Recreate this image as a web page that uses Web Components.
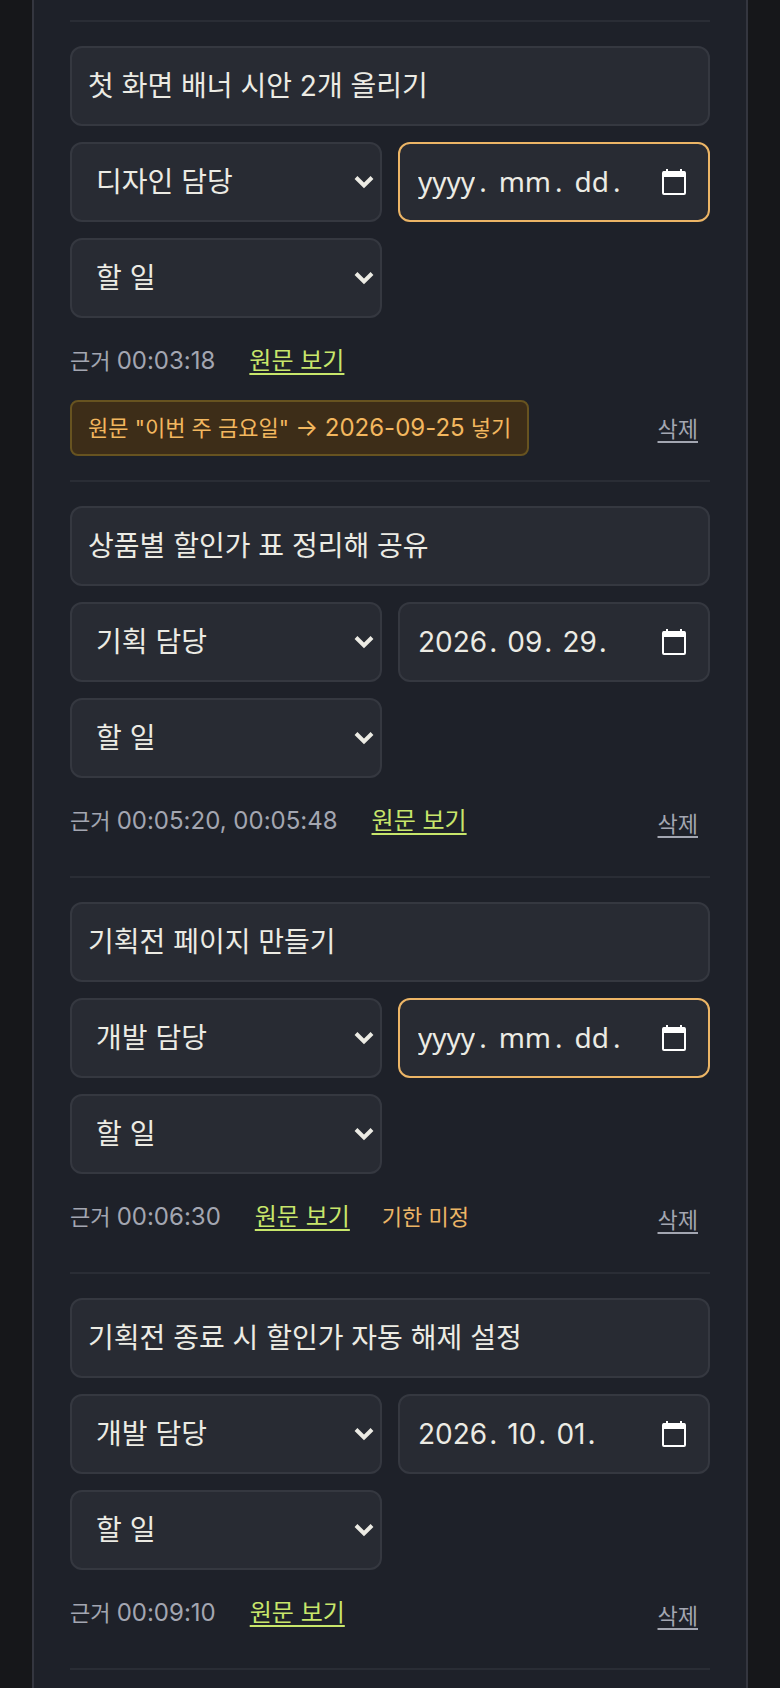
<!DOCTYPE html>
<html lang="ko">
<head>
<meta charset="utf-8">
<meta name="viewport" content="width=device-width, initial-scale=1">
<title>할 일 목록</title>
<style>
body { margin: 0; background: #16171a; color: #ecebe4; font-family: Inter, "Noto Sans CJK KR", sans-serif; }
</style>
</head>
<body>
<task-card>
  <task-item name="첫 화면 배너 시안 2개 올리기" owner="디자인 담당" evidence="00:03:18" phrase="이번 주 금요일" suggestion="2026-09-25"></task-item>
  <task-item name="상품별 할인가 표 정리해 공유" owner="기획 담당" due="2026-09-29" evidence="00:05:20, 00:05:48"></task-item>
  <task-item name="기획전 페이지 만들기" owner="개발 담당" evidence="00:06:30" note="기한 미정"></task-item>
  <task-item name="기획전 종료 시 할인가 자동 해제 설정" owner="개발 담당" due="2026-10-01" evidence="00:09:10"></task-item>
</task-card>
<script>
class TaskCard extends HTMLElement {
  constructor() {
    super();
    this.attachShadow({ mode: 'open' }).innerHTML = `
      <style>
        :host { display: block; box-sizing: border-box; min-height: 100vh; margin: 0 32px; padding: 20px 36px 0;
          background: #1e2129; border: solid #34363f; border-width: 0 2px; }
        .list { border-bottom: 2px solid #2a2d35; }
      </style>
      <div class="list" role="list"><slot></slot></div>`;
  }
}

const fieldStyle = `
  * { box-sizing: border-box; }
  :host { display: grid; min-width: 0; align-items: center; }
  .box { grid-area: 1 / 1; width: 100%; height: 80px; margin: 0; border: 2px solid #353840; border-radius: 12px;
    background: #282b33; color: inherit; font: inherit; font-size: 28px; padding: 0 16px; outline: none; }
  svg { display: block; }`;

class TextField extends HTMLElement {
  connectedCallback() {
    this.attachShadow({ mode: 'open' }).innerHTML = `
      <style>${fieldStyle}
        .box { padding-bottom: 4px; }
      </style><input class="box" type="text" aria-label="할 일 이름">`;
    this.shadowRoot.querySelector('input').value = this.getAttribute('value');
  }
}

class SelectField extends HTMLElement {
  connectedCallback() {
    this.attachShadow({ mode: 'open' }).innerHTML = `
      <style>${fieldStyle}
        select { appearance: none; }
        .box { padding: 0 48px 0 24px; }
        svg { grid-area: 1 / 1; justify-self: end; margin-right: 8px; pointer-events: none; }
      </style>
      <select class="box"><option></option></select>
      <svg width="20" height="14" viewBox="0 0 20 14" fill="none" stroke="#ecebe4" stroke-width="4" aria-hidden="true"><path d="M2 2.5l8 8 8-8"/></svg>`;
    this.shadowRoot.querySelector('select').setAttribute('aria-label', this.getAttribute('label'));
    this.shadowRoot.querySelector('option').textContent = this.getAttribute('value');
  }
}

class DateField extends HTMLElement {
  connectedCallback() {
    this.attachShadow({ mode: 'open' }).innerHTML = `
      <style>${fieldStyle}
        .box { display: flex; align-items: center; gap: 8px; }
        .part { display: flex; align-items: center; }
        input { field-sizing: content; height: 40px; margin: 0; padding: 0 2px; border: 0; background: none; color: inherit;
          font: inherit; outline: none; }
        input::placeholder { color: inherit; opacity: 1; }
        :host(:not([value])) .box { border-color: #ecb566; font-family: "Noto Sans", sans-serif; gap: 10px; padding-bottom: 2px; }
        :host(:not([value])) input { padding-right: 4px; }
        button { grid-area: 1 / 1; justify-self: end; margin-right: 24px; padding: 0; border: 0; background: none; }
      </style>
      <div class="box" role="group" aria-label="기한">
        <span class="part"><input type="text" placeholder="yyyy" aria-label="연도">.</span>
        <span class="part"><input type="text" placeholder="mm" aria-label="월">.</span>
        <span class="part"><input type="text" placeholder="dd" aria-label="일">.</span>
      </div>
      <button type="button" aria-label="달력 열기"><svg width="24" height="26" viewBox="0 0 24 26" fill="none"><rect x="1" y="3" width="22" height="22" rx="1" stroke="#fff" stroke-width="2"/><path d="M1 2.5h22v5.5H1zM4 0h2v3H4zM18 0h2v3h-2z" fill="#fff"/></svg></button>`;
    const parts = (this.getAttribute('value') || '').split('-');
    this.shadowRoot.querySelectorAll('input').forEach((input, i) => { input.value = parts[i] || ''; });
  }
}

class TaskItem extends HTMLElement {
  connectedCallback() {
    const a = n => (this.getAttribute(n) || '').replace(/&/g, '&amp;').replace(/"/g, '&quot;');
    this.setAttribute('role', 'listitem');
    this.attachShadow({ mode: 'open' }).innerHTML = `
      <style>
        * { box-sizing: border-box; }
        :host { display: block; padding: 24px 0; border-top: 2px solid #2a2d35; }
        .fields { display: grid; grid-template-columns: 1fr 1fr; gap: 16px; }
        .wide { grid-column: 1 / -1; }
        .meta { display: flex; flex-wrap: wrap; align-items: center; gap: 8px 32px; margin-top: 16px; font-size: 22px; }
        .evidence, .note, a { height: 58px; line-height: 54px; }
        .evidence { color: #a3a6b1; padding-right: 2px; }
        .number { font-size: 24px; }
        a { color: #c8e66b; font-size: 24px; text-underline-offset: 4px; text-decoration-thickness: 2px; }
        .note { color: #ecb566; }
        button { height: 56px; font: inherit; margin: 0; }
        .suggest { padding: 0 16px 4px; border: 2px solid #675320; border-radius: 8px; background: #3d2d18; color: #f3b75f; }
        .delete { margin-left: auto; padding: 0 12px 2px; border: 0; background: none; color: #a3a6b1;
          text-decoration: underline 2px; text-underline-offset: 4px; }
      </style>
      <div class="fields">
        <text-field class="wide" value="${a('name')}"></text-field>
        <select-field label="담당" value="${a('owner')}"></select-field>
        <date-field ${this.hasAttribute('due') ? `value="${a('due')}"` : ''}></date-field>
        <select-field label="상태" value="할 일"></select-field>
      </div>
      <div class="meta">
        <span class="evidence">근거 <span class="number">${a('evidence')}</span></span>
        <a href="#source">원문 보기</a>
        ${this.hasAttribute('note') ? `<span class="note">${a('note')}</span>` : ''}
        ${this.hasAttribute('suggestion') ? `<button class="suggest" type="button">원문 "${a('phrase')}" <span class="number">→ ${a('suggestion')}</span> 넣기</button>` : ''}
        <button class="delete" type="button">삭제</button>
      </div>`;
  }
}
customElements.define('text-field', TextField);
customElements.define('select-field', SelectField);
customElements.define('date-field', DateField);
customElements.define('task-item', TaskItem);
customElements.define('task-card', TaskCard);
</script>
</body>
</html>
